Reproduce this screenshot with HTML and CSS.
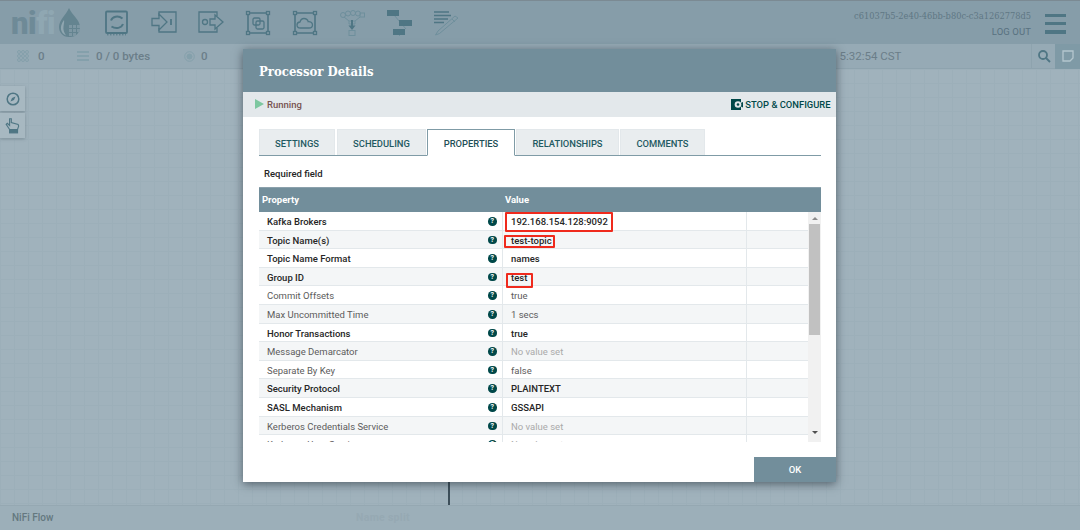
FILE: index.html
```html
<!DOCTYPE html>
<html lang="en">
<head>
<meta charset="utf-8">
<title>NiFi Flow</title>
<link rel="stylesheet" href="styles.css">
</head>
<body>
<div class="app">
  <header class="topbar">
    <div class="logo"><span class="logo-text">ni<span class="logo-light">fi</span></span>
      <svg class="drop" width="21" height="29" viewBox="0 0 21 29"><path d="M10 0C7 7 0 12 0 19c0 5.500 4 10 9.500 10h2c5.500 0 9.500-4.500 9.500-10C21 12 13 7 10 0Z" fill="#648490"/><path d="M5 12C2.500 15.500 1.500 18.500 2 21.500c.5 3 2.500 5 5 6-2-3-3-6-2.500-9 .3-2.500 1-4.500.5-6.500Z" fill="#8fa6b0"/><g fill="#7d97a3"><rect x="10" y="17" width="3" height="3"/><rect x="14" y="17" width="3" height="3"/><rect x="18" y="17" width="3" height="3"/><rect x="10" y="21" width="3" height="3"/><rect x="14" y="21" width="3" height="3"/><rect x="18" y="21" width="3" height="3"/><rect x="10" y="25" width="3" height="3"/><rect x="14" y="25" width="3" height="3"/></g></svg>
    </div>
    <nav class="tools">
      <svg class="tool" width="26" height="26" viewBox="0 0 26 26" fill="none" stroke="#4f7684" stroke-width="1.800"><rect x="2" y="1.500" width="21" height="21.500" rx="1"/><path d="M7 10.500C8.500 6.500 14 5 18.500 8.500M19 14c-1.500 4-7 5.500-11.500 2.500" stroke-width="2"/><path d="M3 24.800h19" stroke-width="1" stroke-dasharray="1.500 1.500"/></svg>
      <svg class="tool" width="26" height="26" viewBox="0 0 26 26" fill="none" stroke="#4f7684" stroke-width="1.300"><path d="M8 6V2h17v20H8v-4"/><path d="M1 8.500h7V4l8 8-8 8v-4.500H1Z"/><path d="M20 9v6" stroke-width="1.800"/></svg>
      <svg class="tool" width="26" height="26" viewBox="0 0 26 26" fill="none" stroke="#4f7684" stroke-width="1.300"><path d="M19 6V2H1v20h18v-4"/><circle cx="7" cy="12" r="2.500"/><path d="M12 9h5V5l8 7-8 7v-4h-5Z"/></svg>
      <svg class="tool" width="26" height="26" viewBox="0 0 26 26" fill="none" stroke="#4f7684" stroke-width="1.300"><path d="M5 3h16M5 23h16M3 5v16M23 5v16" stroke-width="1.600"/><rect x="1.500" y="1.500" width="3" height="3"/><rect x="21.500" y="1.500" width="3" height="3"/><rect x="1.500" y="21.500" width="3" height="3"/><rect x="21.500" y="21.500" width="3" height="3"/><rect x="8" y="8" width="7" height="7" rx="1.500"/><rect x="11" y="11" width="8" height="8" rx="1.500"/></svg>
      <svg class="tool" width="26" height="26" viewBox="0 0 26 26" fill="none" stroke="#4f7684" stroke-width="1.300"><path d="M5 3h16M5 23h16M3 5v16M23 5v16" stroke-width="1.600"/><rect x="1.500" y="1.500" width="3" height="3"/><rect x="21.500" y="1.500" width="3" height="3"/><rect x="1.500" y="21.500" width="3" height="3"/><rect x="21.500" y="21.500" width="3" height="3"/><path d="M8.500 18c-2.500 0-3.500-1.500-3.500-3s1-2.800 3-3c.5-2 2-3.500 4-3.500s3.700 1.300 4.200 3.200c2-.3 4.300.8 4.300 3.300 0 2-1.500 3-3.500 3Z"/></svg>
      <svg class="tool" width="26" height="26" viewBox="0 0 26 26" fill="none" stroke="#6e8f9c" stroke-width="1"><circle cx="4" cy="5" r="2.500"/><circle cx="9" cy="3.500" r="2.500"/><circle cx="14" cy="3" r="2.500"/><circle cx="19" cy="3.500" r="2.500"/><rect x="21" y="3" width="4.500" height="4"/><path d="M5 7l5 4h6l5-4M10 11v3h6v-3"/><path d="M13 10v8" stroke="#4f7684" stroke-width="2"/><path d="M9.500 15.500h7L13 20Z" fill="#4f7684" stroke="none"/><rect x="10" y="20.500" width="6" height="5"/></svg>
      <svg class="tool" width="26" height="26" viewBox="0 0 26 26"><path d="M8 5l12 14M17 22l-6 6" stroke="#6e8f9c" stroke-width="1" fill="none"/><rect x="1" y="0" width="12" height="6" fill="#4f7684"/><rect x="13" y="10" width="13" height="6" fill="#4f7684"/><rect x="7" y="19" width="12" height="6" fill="#4f7684"/></svg>
      <svg class="tool" width="26" height="26" viewBox="0 0 26 26" fill="none" stroke="#4f7684"><path d="M1 2h15M1 5.500h17M1 9h14M1 12.500h10" stroke-width="1.500"/><path d="M22 6L5 21l-2.500 4 4-1.500L25 8ZM19 9l3 3" stroke="#6e8f9c" stroke-width="1"/></svg>
    </nav>
    <div class="user">
      <div class="user-id">c61037b5-2e40-46bb-b80c-c3a1262778d5</div>
      <div class="logout">LOG OUT</div>
    </div>
    <div class="burger"><i></i><i></i><i></i></div>
  </header>

  <div class="stats">
    <svg class="stat-icon" width="12" height="12" viewBox="0 0 12 12" fill="none" stroke="#84a0ab" stroke-width="1"><circle cx="2" cy="2" r="1.500"/><circle cx="6" cy="2" r="1.500"/><circle cx="10" cy="2" r="1.500"/><circle cx="2" cy="6" r="1.500"/><circle cx="6" cy="6" r="1.500"/><circle cx="10" cy="6" r="1.500"/><circle cx="2" cy="10" r="1.500"/><circle cx="6" cy="10" r="1.500"/><circle cx="10" cy="10" r="1.500"/></svg>
    <span class="stat s1">0</span>
    <svg class="stat-icon" width="12" height="10" viewBox="0 0 12 10" fill="#84a0ab"><rect y="0" width="12" height="2"/><rect y="4" width="12" height="2"/><rect y="8" width="12" height="2"/></svg>
    <span class="stat s2">0 / 0 bytes</span>
    <svg class="stat-icon" width="11" height="11" viewBox="0 0 11 11" fill="none" stroke="#84a0ab"><circle cx="5.500" cy="5.500" r="4.800"/><circle cx="5.500" cy="5.500" r="2.500" fill="#84a0ab"/></svg>
    <span class="stat s3">0</span>
    <span class="stat clock">5:32:54 CST</span>
    <div class="search-btn"><svg width="14" height="14" viewBox="0 0 14 14" fill="none" stroke="#4f7684" stroke-width="1.800"><circle cx="6" cy="6" r="4"/><path d="M9 9l4 4"/></svg></div>
    <div class="note-btn"><svg width="12" height="12" viewBox="0 0 12 12" fill="none" stroke="#b4c6ce" stroke-width="1.300"><path d="M1 1h10v7l-3 3H1Z"/></svg></div>
  </div>

  <main class="canvas">
    <div class="palette">
      <div class="pal-btn"><svg width="14" height="14" viewBox="0 0 14 14" fill="none" stroke="#4f7684" stroke-width="1.500"><circle cx="7" cy="7" r="5.800"/><path d="M9.500 4.500L8 8 4.500 9.500 6 6Z" fill="#4f7684" stroke="none"/></svg></div>
      <div class="pal-btn"><svg width="16" height="17" viewBox="0 0 14 15" fill="none" stroke="#4f7684" stroke-width="1"><path d="M4 11L1 6.500l1-1 2 2V1.500h1.500V5l6 1.500.5 1.500-1 3Z"/><rect x="4" y="11.500" width="7" height="2.500" fill="#4f7684"/></svg></div>
    </div>
    <div class="conn"></div>
  </main>

  <footer class="crumbs">
    <span class="crumb">NiFi Flow</span>
    <span class="ghost">Name split</span>
  </footer>
</div>

<section class="dialog">
  <h1 class="d-title">Processor Details</h1>
  <div class="d-status">
    <span class="run-tri"></span><span class="run-text">Running</span>
    <span class="stop"><svg width="12" height="11" viewBox="0 0 12 11"><rect width="10" height="11" fill="#004849"/><circle cx="7" cy="5.500" r="3.200" fill="none" stroke="#004849" stroke-width="4.500" stroke-dasharray="1.800 1.800"/><circle cx="7" cy="5.500" r="3.300" fill="#e3e8eb"/><circle cx="7" cy="5.500" r="1.300" fill="#004849"/></svg>STOP &amp; CONFIGURE</span>
  </div>
  <div class="d-body">
    <div class="tabs">
      <div class="tab t1">SETTINGS</div>
      <div class="tab t2">SCHEDULING</div>
      <div class="tab t3 active">PROPERTIES</div>
      <div class="tab t4">RELATIONSHIPS</div>
      <div class="tab t5">COMMENTS</div>
    </div>
    <div class="required">Required field</div>
    <div class="thead"><div class="th-p">Property</div><div class="th-v">Value</div></div>
    <div class="tbody">
      <div class="rows">
        <div class="row req"><div class="c-p">Kafka Brokers<i class="help">?</i></div><div class="c-v ip">192.168.154.128:9092</div><div class="c-x"></div></div>
        <div class="row req"><div class="c-p">Topic Name(s)<i class="help">?</i></div><div class="c-v">test-topic</div><div class="c-x"></div></div>
        <div class="row req"><div class="c-p">Topic Name Format<i class="help">?</i></div><div class="c-v">names</div><div class="c-x"></div></div>
        <div class="row req"><div class="c-p">Group ID<i class="help">?</i></div><div class="c-v">test</div><div class="c-x"></div></div>
        <div class="row"><div class="c-p">Commit Offsets<i class="help">?</i></div><div class="c-v">true</div><div class="c-x"></div></div>
        <div class="row"><div class="c-p">Max Uncommitted Time<i class="help">?</i></div><div class="c-v">1 secs</div><div class="c-x"></div></div>
        <div class="row req"><div class="c-p">Honor Transactions<i class="help">?</i></div><div class="c-v">true</div><div class="c-x"></div></div>
        <div class="row"><div class="c-p">Message Demarcator<i class="help">?</i></div><div class="c-v unset">No value set</div><div class="c-x"></div></div>
        <div class="row"><div class="c-p">Separate By Key<i class="help">?</i></div><div class="c-v">false</div><div class="c-x"></div></div>
        <div class="row req"><div class="c-p">Security Protocol<i class="help">?</i></div><div class="c-v">PLAINTEXT</div><div class="c-x"></div></div>
        <div class="row req"><div class="c-p">SASL Mechanism<i class="help">?</i></div><div class="c-v">GSSAPI</div><div class="c-x"></div></div>
        <div class="row"><div class="c-p">Kerberos Credentials Service<i class="help">?</i></div><div class="c-v unset">No value set</div><div class="c-x"></div></div>
        <div class="row"><div class="c-p">Kerberos User Service<i class="help">?</i></div><div class="c-v unset">No value set</div><div class="c-x"></div></div>
      </div>
      <div class="sbar"><span class="arr-up"></span><span class="thumb"></span><span class="arr-down"></span></div>
    </div>
    <span class="mark m1"></span><span class="mark m2"></span><span class="mark m3"></span>
  </div>
  <div class="d-foot"><div class="ok">OK</div></div>
</section>
</body>
</html>
```

FILE: styles.css
```css
* { box-sizing: border-box; }
html, body { margin: 0; height: 100%; overflow: hidden; }
body { font-family: Roboto, "Liberation Sans", sans-serif; background: #a0b2bc; }

.app { display: flex; flex-direction: column; height: 530px; }

.topbar {
  height: 44px; flex: none; display: flex; align-items: flex-start;
  background: #869da9; border-top: 1px solid #7b8a93;
}
.logo { width: 104px; flex: none; display: flex; align-items: flex-start; padding-left: 11px; }
.logo-text {
  font: 900 31px/32px Roboto, sans-serif; color: #6e8a97; letter-spacing: -.4px;
  margin-top: 7px; width: 47px; flex: none;
}
.logo-light { color: #8fa7b2; }
.drop { margin-top: 7px; margin-left: 1px; }
.tools { display: flex; gap: 21px; padding-top: 9px; flex: 1; }
.tool { flex: none; }
.user { width: 200px; text-align: right; padding-top: 8px; margin-right: 14px; }
.user-id { font: 400 9.200px/13px "DejaVu Serif Condensed", "DejaVu Serif", serif; color: #5f7784; white-space: nowrap; }
.logout { font: 400 9.500px/13px Roboto, sans-serif; color: #587180; margin-top: 3px; letter-spacing: .1px; }
.burger { width: 21px; display: flex; flex-direction: column; gap: 5px; padding-top: 13px; margin-right: 14px; }
.burger i { display: block; height: 3.200px; background: #4f7684; }

.stats {
  height: 25px; flex: none; display: flex; align-items: center;
  background: #96aab5; border-bottom: 1px solid #8ea3ae; padding-left: 17px;
  font: 500 11.500px/1 Roboto, sans-serif; color: #6b7e89;
}
.stat { margin-top: 1px; }
.stat-icon { flex: none; }
.s1 { margin-left: 9px; width: 39px; }
.s2 { margin-left: 7px; width: 88px; }
.s3 { margin-left: 6px; }
.clock { margin-left: 632px; flex: 1; font-weight: 400; }
.search-btn { width: 24px; height: 24px; flex: none; border-left: 1px solid #8ea3ae; display: flex; align-items: center; justify-content: center; }
.note-btn { width: 25px; height: 25px; flex: none; background: #7f9aa6; display: flex; align-items: center; justify-content: center; }

.canvas {
  flex: 1; position: relative;
  background-color: #a0b2bc;
  background-image:
    linear-gradient(#9cafb9 1px, transparent 1px),
    linear-gradient(90deg, #9cafb9 1px, transparent 1px);
  background-size: 14px 14px;
}
.palette { position: absolute; left: 0; top: 17px; display: flex; flex-direction: column; gap: 2px; }
.pal-btn {
  width: 25px; height: 25px; background: #a7b8c1; display: flex; align-items: center; justify-content: center;
  box-shadow: 0 1px 3px rgba(60,80,90,.35);
}
.conn { position: absolute; left: 448px; bottom: 0; width: 2px; height: 30px; background: #3d4f5a; }

.crumbs {
  height: 25px; flex: none; display: flex; align-items: center; padding-left: 12px;
  background: #9cafb9; border-top: 1px solid #95a8b2;
  font: 500 10px/1 Roboto, sans-serif; color: #64787f;
}
.crumb { width: 344px; flex: none; }
.ghost { color: #96a9b3; font-weight: 700; font-size: 10.500px; letter-spacing: .3px; }

.dialog {
  position: absolute; left: 243px; top: 49px; width: 593px; height: 433px;
  background: #fff; display: flex; flex-direction: column;
  box-shadow: 0 2px 9px rgba(30,40,50,.6);
}
.d-title {
  margin: 0; height: 43px; flex: none; padding: 14px 0 0 16px;
  background: #728e9b; color: #fff;
  font: 700 13px/18px "DejaVu Serif Condensed", "DejaVu Serif", serif;
}
.d-status {
  height: 25px; flex: none; display: flex; align-items: center; padding: 0 5.500px 0 12px;
  background: #e3e8eb;
}
.run-tri { width: 0; height: 0; border-left: 9px solid #7dc7a0; border-top: 5px solid transparent; border-bottom: 5px solid transparent; margin-top: -2px; }
.run-text { margin-left: 3px; font: 500 9.500px/1 Roboto, sans-serif; color: #775351; flex: 1; }
.stop { display: flex; align-items: center; gap: 2px; font: 500 9.400px/1 Roboto, sans-serif; color: #004849; }

.d-body { flex: 1; padding: 12px 15px 0 16px; position: relative; min-height: 0; }
.tabs { display: flex; height: 27px; gap: 2px; border-bottom: 1px solid #7f9ba6; }
.tab {
  height: 26px; background: #e9edef; border: 1px solid #e3e8eb; border-bottom: 0;
  display: flex; align-items: center; justify-content: center;
  font: 500 9.400px/1 Roboto, sans-serif; color: #1f5a62; padding-top: 2px;
}
.t1 { width: 76px; } .t2 { width: 89px; } .t3 { width: 88px; margin-right: -1px; margin-left: -1px; }
.t4 { width: 103px; } .t5 { width: 85px; margin-left: -1px; }
.tab.active { height: 27px; background: #fff; border: 1px solid #7f9ba6; border-bottom: 1px solid #fff; color: #1f4f57; position: relative; }
.required { height: 31px; padding: 12px 0 0 5px; font: 500 9.500px/12px Roboto, sans-serif; color: #262626; }
.thead {
  height: 25px; display: flex; align-items: center; background: #728e9b; border-top: 1px solid #8ba1ac;
  font: 700 9.500px/1 Roboto, sans-serif; color: #fff;
}
.th-p { width: 246px; padding-left: 3px; }
.tbody { display: flex; height: 230px; overflow: hidden; }
.rows { flex: 1; min-width: 0; }
.row {
  display: flex; height: 18.620px; border-bottom: 1px solid #e3e8eb;
  font: 400 9.500px/19px Roboto, sans-serif; color: #5c5c5c; background: #fff;
}
.row:nth-child(even) { background: #f4f6f7; }
.row.req { font-weight: 500; color: #262626; }
.c-p { width: 244px; flex: none; padding-left: 8px; border-right: 1px solid #e3e8eb; display: flex; justify-content: space-between; padding-right: 5.500px; }
.c-v { width: 244px; flex: none; padding-left: 8px; border-right: 1px solid #e3e8eb; }
.c-v.unset { color: #aaa; }
.c-x { flex: 1; }
.help {
  width: 8.500px; height: 8.500px; margin-top: 5px; border-radius: 50%; background: #004849; color: #fff;
  font: 700 7px/8.500px Roboto, sans-serif; text-align: center;
}
.sbar { width: 13px; flex: none; background: #f1f1f1; display: flex; flex-direction: column; align-items: center; padding-top: 5px; }
.arr-up { width: 0; height: 0; border: 3px solid transparent; border-top: 0; border-bottom: 3px solid #8c8c8c; }
.thumb { width: 11px; height: 111px; background: #c1c1c1; margin-top: 4px; flex: none; }
.arr-down { width: 0; height: 0; border: 3px solid transparent; border-bottom: 0; border-top: 3px solid #505050; margin-top: 96px; flex: none; }

.mark { position: absolute; border: 2px solid #ef2a1d; border-radius: 1px; }
.m1 { left: 262px; top: 95px; width: 108px; height: 20px; }
.m2 { left: 261px; top: 117.500px; width: 51px; height: 13px; }
.m3 { left: 263px; top: 155.500px; width: 27px; height: 15px; }

.d-foot { height: 25px; flex: none; display: flex; justify-content: flex-end; }
.ok {
  width: 82px; height: 25px; background: #728e9b; color: #fff;
  display: flex; align-items: center; justify-content: center;
  font: 500 9.500px/1 Roboto, sans-serif;
}
```
